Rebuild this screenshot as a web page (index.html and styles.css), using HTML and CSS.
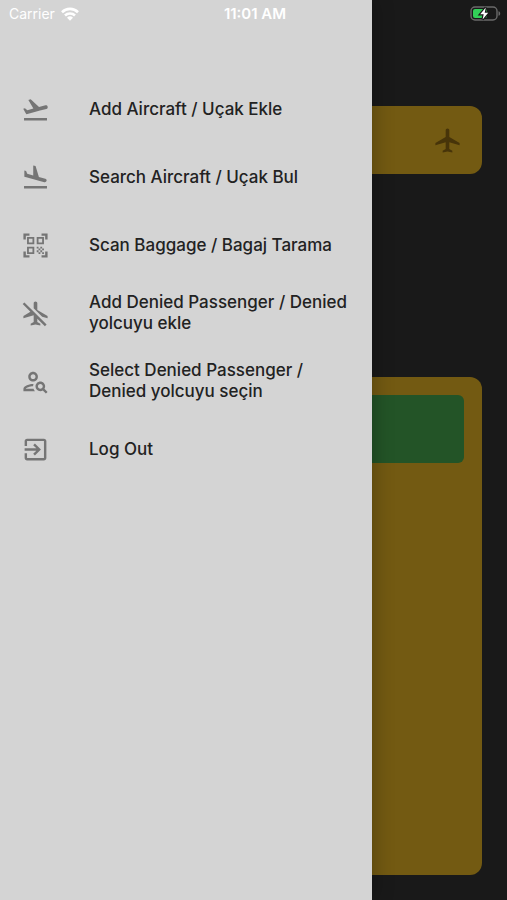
FILE: index.html
```html
<!DOCTYPE html>
<html lang="tr">
<head>
<meta charset="utf-8">
<meta name="viewport" content="width=device-width, initial-scale=1">
<title>Menu</title>
<link rel="stylesheet" href="styles.css">
</head>
<body>
<main class="page">
  <section class="card flight-card">
    <svg class="icon" viewBox="0 0 24 24" aria-hidden="true"><path d="M22 16v-2l-8.5-5V3.5c0-.83-.67-1.5-1.5-1.5s-1.5.67-1.5 1.5V9L2 14v2l8.5-2.5V19L8 20.5V22l4-1 4 1v-1.5L13.5 19v-5.5L22 16z"/></svg>
  </section>
  <section class="card list-card">
    <div class="entry"></div>
  </section>
</main>

<nav class="drawer">
  <ul class="menu">
    <li><button class="item" type="button">
      <svg class="icon" viewBox="0 0 24 24" aria-hidden="true"><path d="M2.5 19h19v2h-19zm19.57-9.36c-.21-.8-1.04-1.28-1.84-1.06L14.92 10l-6.9-6.43-1.93.51 4.14 7.17-4.97 1.33-1.97-1.54-1.45.39 1.82 3.16.77 1.33 1.6-.43 5.31-1.42 4.35-1.16L21 11.49c.81-.23 1.28-1.05 1.07-1.85z"/></svg>
      <span>Add Aircraft / Uçak Ekle</span></button></li>
    <li><button class="item" type="button">
      <svg class="icon" viewBox="0 0 24 24" aria-hidden="true"><path d="M2.5 19h19v2h-19zm7.18-5.73l4.35 1.16 5.31 1.42c.8.21 1.62-.26 1.84-1.06.21-.8-.26-1.62-1.06-1.84l-5.31-1.42-2.76-9.02L10.12 2v8.28L5.15 8.95l-.93-2.32-1.45-.39v5.17l1.6.43 5.31 1.43z"/></svg>
      <span>Search Aircraft / Uçak Bul</span></button></li>
    <li><button class="item" type="button">
      <svg class="icon" viewBox="0 0 24 24" aria-hidden="true"><path d="M9.5 6.5v3h-3v-3h3M11 5H5v6h6V5zM9.5 14.5v3h-3v-3h3M11 13H5v6h6v-6zM17.5 6.5v3h-3v-3h3M19 5h-6v6h6V5zM13 13h1.5v1.5H13V13zM14.5 14.5H16V16h-1.5v-1.5zM16 13h1.5v1.5H16V13zM13 16h1.5v1.5H13V16zM14.5 17.5H16V19h-1.5v-1.5zM16 16h1.5v1.5H16V16zM17.5 14.5H19V16h-1.5v-1.5zM17.5 17.5H19V19h-1.5v-1.5zM22 7h-2V4h-3V2h5v5zM22 22v-5h-2v3h-3v2h5zM2 22h5v-2H4v-3H2v5zM2 2v5h2V4h3V2H2z"/></svg>
      <span>Scan Baggage / Bagaj Tarama</span></button></li>
    <li><button class="item" type="button">
      <svg class="icon" viewBox="0 0 24 24" aria-hidden="true"><path d="M10.5 7.67V3.5C10.5 2.67 11.17 2 12 2s1.5.67 1.5 1.5V9l8.5 5v2l-4.49-1.32L10.5 7.67zM19.78 22.61l1.41-1.41L13.5 13.5 9.56 9.56 2.81 2.81 1.39 4.22l6.38 6.38L2 14v2l8.5-2.5V19L8 20.5V22l4-1 4 1v-1.5L13.5 19v-2.67l6.28 6.28z"/></svg>
      <span>Add Denied Passenger / Denied yolcuyu ekle</span></button></li>
    <li><button class="item" type="button">
      <svg class="icon" viewBox="0 0 24 24" aria-hidden="true"><path d="M10 12c2.21 0 4-1.79 4-4s-1.79-4-4-4-4 1.79-4 4 1.79 4 4 4zm0-6c1.1 0 2 .9 2 2s-.9 2-2 2-2-.9-2-2 .9-2 2-2zm-6 12c.22-.72 3.31-2 6-2 0-.7.13-1.37.35-1.99C7.62 13.91 2 15.27 2 18v2h9.54c-.52-.58-.93-1.25-1.19-2H4zm15.43.02c.36-.59.57-1.28.57-2.02 0-2.21-1.79-4-4-4s-4 1.79-4 4 1.79 4 4 4c.74 0 1.43-.22 2.02-.57L20.59 22 22 20.59l-2.57-2.57zM16 18c-1.1 0-2-.9-2-2s.9-2 2-2 2 .9 2 2-.9 2-2 2z"/></svg>
      <span>Select Denied Passenger / Denied yolcuyu seçin</span></button></li>
    <li><button class="item" type="button">
      <svg class="icon" viewBox="0 0 24 24" aria-hidden="true"><path d="M10.09 15.59L11.5 17l5-5-5-5-1.41 1.41L12.67 11H3v2h9.67l-2.58 2.59zM19 3H5c-1.11 0-2 .9-2 2v4h2V5h14v14H5v-4H3v4c0 1.1.89 2 2 2h14c1.1 0 2-.9 2-2V5c0-1.1-.9-2-2-2z"/></svg>
      <span>Log Out</span></button></li>
  </ul>
</nav>

<header class="status">
  <div class="carrier">
    <span>Carrier</span>
    <svg class="wifi" viewBox="0 0 18 14" aria-hidden="true"><g fill="none" stroke="#fff" stroke-width="2.6"><path d="M1 5.2a11.4 11.4 0 0 1 16 0"/><path d="M4 8.5a7.2 7.2 0 0 1 10 0"/></g><path fill="#fff" d="M9 13.8l-3-3a4.3 4.3 0 0 1 6 0z"/></svg>
  </div>
  <span class="time">11:01 AM</span>
  <svg class="battery" viewBox="0 0 31 15" aria-hidden="true"><rect x="1" y="1" width="26" height="13" rx="4" fill="none" stroke="#6a6a6a" stroke-width="1.4"/><path d="M28.5 5.2c2.3.6 2.3 4 0 4.6z" fill="#6a6a6a"/><rect x="3" y="3" width="14" height="9" rx="2" fill="#32cf58"/><path d="M15.8 1.5L10.2 8.2h3.5L12.6 13.500l5.600-6.700h-3.500z" fill="#fff" stroke="#191919" stroke-width="2.4" paint-order="stroke"/></svg>
</header>
</body>
</html>
```

FILE: styles.css
```css
* {
  box-sizing: border-box;
}

body {
  margin: 0;
  min-height: 100vh;
  position: relative;
  background: #191919;
  font-family: Inter, "Liberation Sans", sans-serif;
}

.page {
  display: flex;
  flex-direction: column;
  gap: 203px;
  min-height: 100vh;
  padding: 106px 25px 25px;
}

.card {
  border-radius: 12px;
  background: #735a12;
}

.flight-card {
  display: flex;
  align-items: center;
  justify-content: flex-end;
  height: 68px;
  padding: 0 20px;
}

.icon {
  flex: none;
  width: 29px;
  height: 29px;
  fill: #757575;
}

.flight-card .icon {
  fill: #473409;
}

.list-card {
  flex: 1;
  padding: 18px;
}

.entry {
  height: 68px;
  border-radius: 6px;
  background: #235427;
}

.drawer {
  position: absolute;
  top: 0;
  bottom: 0;
  left: 0;
  width: 73.4%;
  padding-top: 75px;
  background: #d4d4d4;
  box-shadow: 0 0 20px rgba(0, 0, 0, 0.3);
}

.menu {
  margin: 0;
  padding: 0;
  list-style: none;
}

.item {
  display: flex;
  align-items: center;
  gap: 39px;
  width: 100%;
  height: 68px;
  padding: 0 21px;
  border: 0;
  background: none;
  color: #222;
  font: 500 17px/21px Inter, "Liberation Sans", sans-serif;
  text-align: left;
}

.status {
  position: absolute;
  top: 0;
  left: 0;
  right: 0;
  display: grid;
  grid-template-columns: 1fr auto 1fr;
  align-items: center;
  height: 27px;
  padding: 0 6px 0 9px;
  color: #fff;
  font-size: 14px;
}

.carrier {
  display: flex;
  align-items: center;
  gap: 6px;
}

.wifi {
  width: 18px;
  height: 14px;
}

.time {
  font-size: 15px;
  font-weight: 600;
}

.battery {
  width: 31px;
  height: 15px;
  justify-self: end;
}
```
